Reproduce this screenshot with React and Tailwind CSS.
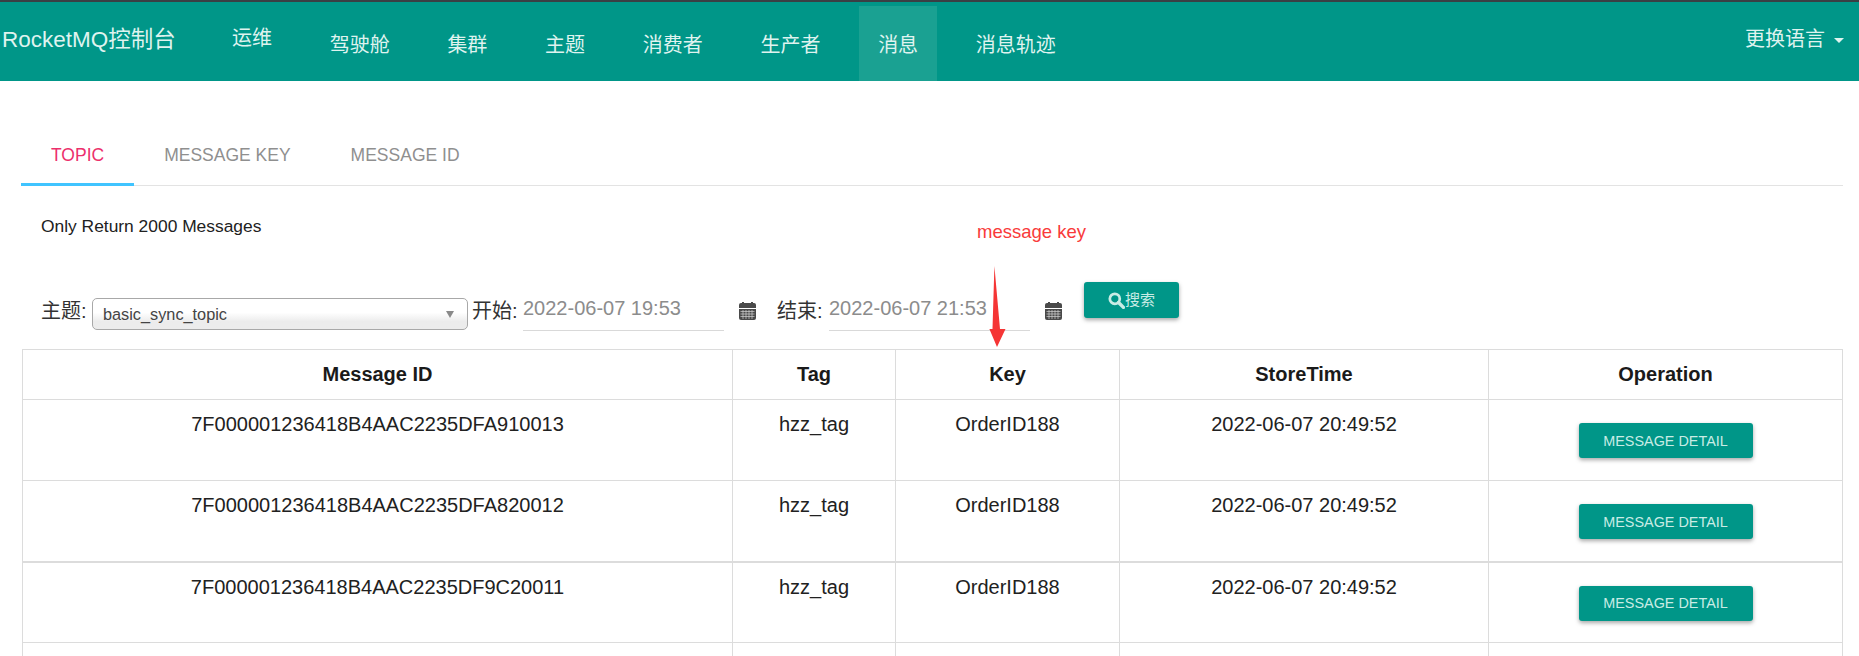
import React from "react";

const nav = ["运维", "驾驶舱", "集群", "主题", "消费者", "生产者", "消息", "消息轨迹"];
const rows = [
  ["7F000001236418B4AAC2235DFA910013", false],
  ["7F000001236418B4AAC2235DFA820012", false],
  ["7F000001236418B4AAC2235DF9C20011", true],
];

function CalendarIcon() {
  return (
    <svg width="17" height="18" viewBox="0 0 17 18" className="shrink-0">
      <path d="M2 1h13a2 2 0 0 1 2 2v3H0V3a2 2 0 0 1 2-2z" fill="#4a4a4a" />
      <rect x="3" y="0" width="2" height="3" fill="#4a4a4a" />
      <rect x="12" y="0" width="2" height="3" fill="#4a4a4a" />
      <path d="M0 7h17v9a2 2 0 0 1-2 2H2a2 2 0 0 1-2-2z" fill="#4a4a4a" />
      <path d="M1.5 9.5h14M1.5 12h14M1.5 14.5h14M4 8v9M7 8v9M10 8v9M13 8v9" stroke="#fff" strokeWidth="0.7" opacity="0.75" />
    </svg>
  );
}

function SearchIcon() {
  return (
    <svg width="17" height="17" viewBox="0 0 15 15" className="shrink-0">
      <circle cx="6" cy="6" r="4.4" fill="none" stroke="#c9ece5" strokeWidth="2.4" />
      <path d="M9.3 9.3 13.6 13.6" stroke="#c9ece5" strokeWidth="3" strokeLinecap="round" />
    </svg>
  );
}

function DateField({ value, width }) {
  return (
    <div className={`h-[41px] border-b border-[#d9d9d9] text-[20px] leading-[37px] text-[#8c8c8c] font-light ${width}`}>
      {value}
    </div>
  );
}

export default function App() {
  return (
    <div
      className="relative h-[656px] w-[1859px] overflow-hidden bg-white text-[#212121]"
      style={{ fontFamily: '"Liberation Sans", "Noto Sans CJK SC", sans-serif' }}
    >
      <div className="h-[2px] bg-[#3a3f44]" />
      <header className="flex h-[79px] bg-[#009688] text-[#dff3ef]">
        <div className="w-[213px] pl-[2px] pt-[22px] text-[22.5px] leading-[32px]">RocketMQ控制台</div>
        <nav className="flex gap-[19.7px] pt-[4px]">
          {nav.map((n, i) => (
            <div
              key={n}
              className={`h-[75px] px-[19px] text-[20px] leading-[28px] ${i === 0 ? "pt-[18px]" : "pt-[25px]"} ${n === "消息" ? "bg-[#1aa192]" : ""}`}
            >
              {n}
            </div>
          ))}
        </nav>
        <div className="ml-auto flex items-start gap-[9px] pr-[15px] pt-[23px] text-[20px] leading-[28px]">
          更换语言
          <span className="mt-[13px] h-0 w-0 border-x-[5px] border-t-[5px] border-x-transparent border-t-[#dff3ef]" />
        </div>
      </header>

      <main className="pl-[21px] pr-[16px]">
        <div className="mt-[53px] flex h-[52px] border-b border-[#e3e3e3]">
          <div className="h-[52px] border-b-[3px] border-[#40c4ff] px-[30px] pt-[9px] text-[17.5px] leading-[24px] text-[#ec2f6c]">TOPIC</div>
          <div className="px-[30px] pt-[9px] text-[17.5px] leading-[24px] text-[#8f8f8f]">MESSAGE KEY</div>
          <div className="px-[30px] pt-[9px] text-[17.5px] leading-[24px] text-[#8f8f8f]">MESSAGE ID</div>
        </div>

        <div className="pl-[20px] pt-[28px] text-[17.4px] leading-[24px]">Only Return 2000 Messages</div>

        <div className="mt-[37px] flex h-[74px] items-start pl-[20px] text-[20px] leading-[28px] text-[#333]">
          <span className="mt-[22px] w-[51px]">主题:</span>
          <div className="mt-[23px] flex h-[32px] w-[376px] items-center justify-between rounded-[5px] border border-[#a8a8a8] bg-gradient-to-b from-white from-45% to-[#ececec] to-75% pl-[10px] pr-[13px] text-[16.3px] text-[#444]">
            basic_sync_topic
            <span className="h-0 w-0 border-x-[4px] border-t-[7px] border-x-transparent border-t-[#8a8a8a]" />
          </div>
          <span className="ml-[4px] mt-[22px] w-[51px]">开始:</span>
          <DateField value="2022-06-07 19:53" width="mt-[15px] w-[201px]" />
          <span className="ml-[15px] mt-[27px]"><CalendarIcon /></span>
          <span className="ml-[21px] mt-[22px] w-[52px]">结束:</span>
          <DateField value="2022-06-07 21:53" width="mt-[15px] w-[201px]" />
          <span className="ml-[15px] mt-[27px]"><CalendarIcon /></span>
          <button className="ml-[22px] mt-[7px] flex h-[36px] w-[95px] items-center justify-center rounded-[3px] bg-[#009688] text-[15px] text-[#c9ece5] shadow-[0_2px_4px_rgba(0,0,0,0.35)]">
            <SearchIcon />
            搜索
          </button>
        </div>

        <table className="ml-px w-[1820px] table-fixed border-collapse text-[20px]">
          <colgroup>
            <col className="w-[710px]" />
            <col className="w-[163px]" />
            <col className="w-[224px]" />
            <col className="w-[369px]" />
            <col className="w-[354px]" />
          </colgroup>
          <thead>
            <tr className="h-[50px]">
              {["Message ID", "Tag", "Key", "StoreTime", "Operation"].map((h) => (
                <th key={h} className="border border-[#dcdcdc] pb-[2px] text-center text-[20px] font-bold text-[#1a1a1a]">{h}</th>
              ))}
            </tr>
          </thead>
          <tbody>
            {rows.map(([id, thick]) => (
              <tr key={id} className="h-[81px]">
                {[id, "hzz_tag", "OrderID188", "2022-06-07 20:49:52"].map((c) => (
                  <td key={c} className={`border border-[#dcdcdc] pt-[12px] text-center align-top leading-[24px] ${thick ? "border-t-2" : ""}`}>{c}</td>
                ))}
                <td className={`border border-[#dcdcdc] pt-[23px] text-center align-top leading-[24px] ${thick ? "border-t-2" : ""}`}>
                  <button className="h-[35px] w-[174px] rounded-[3px] bg-[#009688] text-[14.4px] text-[#c9ece5] shadow-[0_2px_4px_rgba(0,0,0,0.35)]">MESSAGE DETAIL</button>
                </td>
              </tr>
            ))}
            <tr className="h-[81px]">
              {[0, 1, 2, 3, 4].map((c) => (
                <td key={c} className="border border-[#dcdcdc]" />
              ))}
            </tr>
          </tbody>
        </table>
      </main>

      <div className="absolute left-[977px] top-[220px] text-[18.5px] leading-[24px] text-[#f93a3a]">message key</div>
      <svg className="absolute left-[984px] top-[266px]" width="26" height="84" viewBox="0 0 26 84">
        <polygon points="10.4,0 16,63 21.5,63 13,81 5.4,63 8.5,63" fill="#f53535" />
      </svg>
    </div>
  );
}
